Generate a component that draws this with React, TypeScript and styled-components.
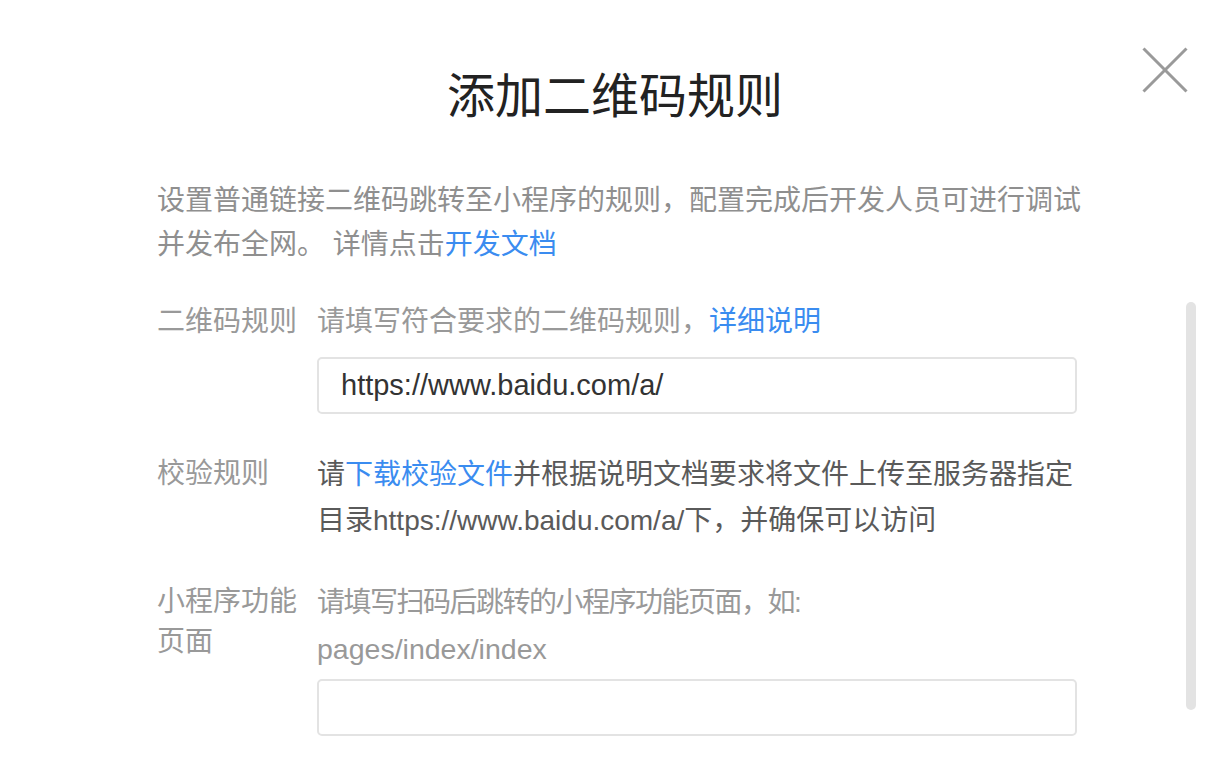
import React from "react";
import styled, { createGlobalStyle } from "styled-components";

const GlobalStyle = createGlobalStyle`
  html, body {
    margin: 0;
    padding: 0;
    background: #ffffff;
  }
  body {
    font-family: "Liberation Sans", "Noto Sans CJK SC", sans-serif;
  }
  * { box-sizing: border-box; }
`;

const Dialog = styled.div`
  position: relative;
  width: 1226px;
  height: 774px;
  overflow: hidden;
  background: #ffffff;
  font-family: "Liberation Sans", "Noto Sans CJK SC", sans-serif;
`;

const CloseButton = styled.button`
  position: absolute;
  left: 1142px;
  top: 47px;
  width: 46px;
  height: 46px;
  padding: 0;
  border: none;
  background: transparent;
  cursor: pointer;
  display: flex;
`;

const ScrollThumb = styled.div`
  position: absolute;
  left: 1186px;
  top: 302px;
  width: 10px;
  height: 408px;
  border-radius: 5px;
  background: #e3e3e3;
`;

const Title = styled.h1`
  margin: 67px 0 0;
  padding-left: 4px;
  text-align: center;
  font-size: 48px;
  line-height: 60px;
  font-weight: 400;
  color: #222222;
`;

const Body = styled.div`
  display: flex;
  flex-direction: column;
  padding-left: 157px;
  width: 1100px;
`;

const Intro = styled.p`
  margin: 52px 0 0;
  width: 930px;
  font-size: 28px;
  line-height: 44px;
  color: #8f8f8f;
`;

const Link = styled.a`
  color: #3a8cf0;
  text-decoration: none;
`;

const Row = styled.div<{ $gap: number }>`
  display: grid;
  grid-template-columns: 160px 760px;
  margin-top: ${(p) => p.$gap}px;
  align-items: start;
`;

const Label = styled.div<{ $lh: number; $pt?: number }>`
  font-size: 28px;
  line-height: ${(p) => p.$lh}px;
  padding-top: ${(p) => p.$pt ?? 0}px;
  color: #999999;
`;

const Content = styled.div`
  display: flex;
  flex-direction: column;
`;

const Hint = styled.div<{ $lh: number; $dark?: boolean }>`
  font-size: 28px;
  line-height: ${(p) => p.$lh}px;
  color: ${(p) => (p.$dark ? "#5a5a5a" : "#999999")};
`;

const Tight = styled.span`
  letter-spacing: -1.5px;
`;

const Example = styled.span`
  display: block;
  font-size: 28.5px;
`;

const Input = styled.input<{ $mt: number }>`
  margin-top: ${(p) => p.$mt}px;
  width: 760px;
  height: 57px;
  padding: 0 22px;
  border: 2px solid #e3e3e3;
  border-radius: 5px;
  font-family: "Liberation Sans", "Noto Sans CJK SC", sans-serif;
  font-size: 29px;
  color: #333333;
  background: #ffffff;
  outline: none;
`;

export default function App() {
  return (
    <>
      <GlobalStyle />
      <Dialog>
        <CloseButton aria-label="关闭">
          <svg width="46" height="46" viewBox="0 0 46 46">
            <line x1="1.5" y1="1.5" x2="44.5" y2="44.5" stroke="#9a9a9a" strokeWidth="3" />
            <line x1="44.5" y1="1.5" x2="1.5" y2="44.5" stroke="#9a9a9a" strokeWidth="3" />
          </svg>
        </CloseButton>
        <Title>添加二维码规则</Title>
        <Body>
          <Intro>
            设置普通链接二维码跳转至小程序的规则，配置完成后开发人员可进行调试并发布全网。 详情点击
            <Link href="#">开发文档</Link>
          </Intro>

          <Row $gap={33}>
            <Label $lh={44}>二维码规则</Label>
            <Content>
              <Hint $lh={44}>
                请填写符合要求的二维码规则，<Link href="#">详细说明</Link>
              </Hint>
              <Input $mt={13} defaultValue="https://www.baidu.com/a/" />
            </Content>
          </Row>

          <Row $gap={38}>
            <Label $lh={44}>校验规则</Label>
            <Content>
              <Hint $lh={46} $dark>
                请<Link href="#">下载校验文件</Link>
                并根据说明文档要求将文件上传至服务器指定目录https://www.baidu.com/a/下，并确保可以访问
              </Hint>
            </Content>
          </Row>

          <Row $gap={35}>
            <Label $lh={40} $pt={3}>
              小程序功能
              <br />
              页面
            </Label>
            <Content>
              <Hint $lh={47}>
                <Tight>请填写扫码后跳转的小程序功能页面，如:</Tight>
                <Example>pages/index/index</Example>
              </Hint>
              <Input $mt={6} defaultValue="" />
            </Content>
          </Row>
        </Body>
        <ScrollThumb />
      </Dialog>
    </>
  );
}
